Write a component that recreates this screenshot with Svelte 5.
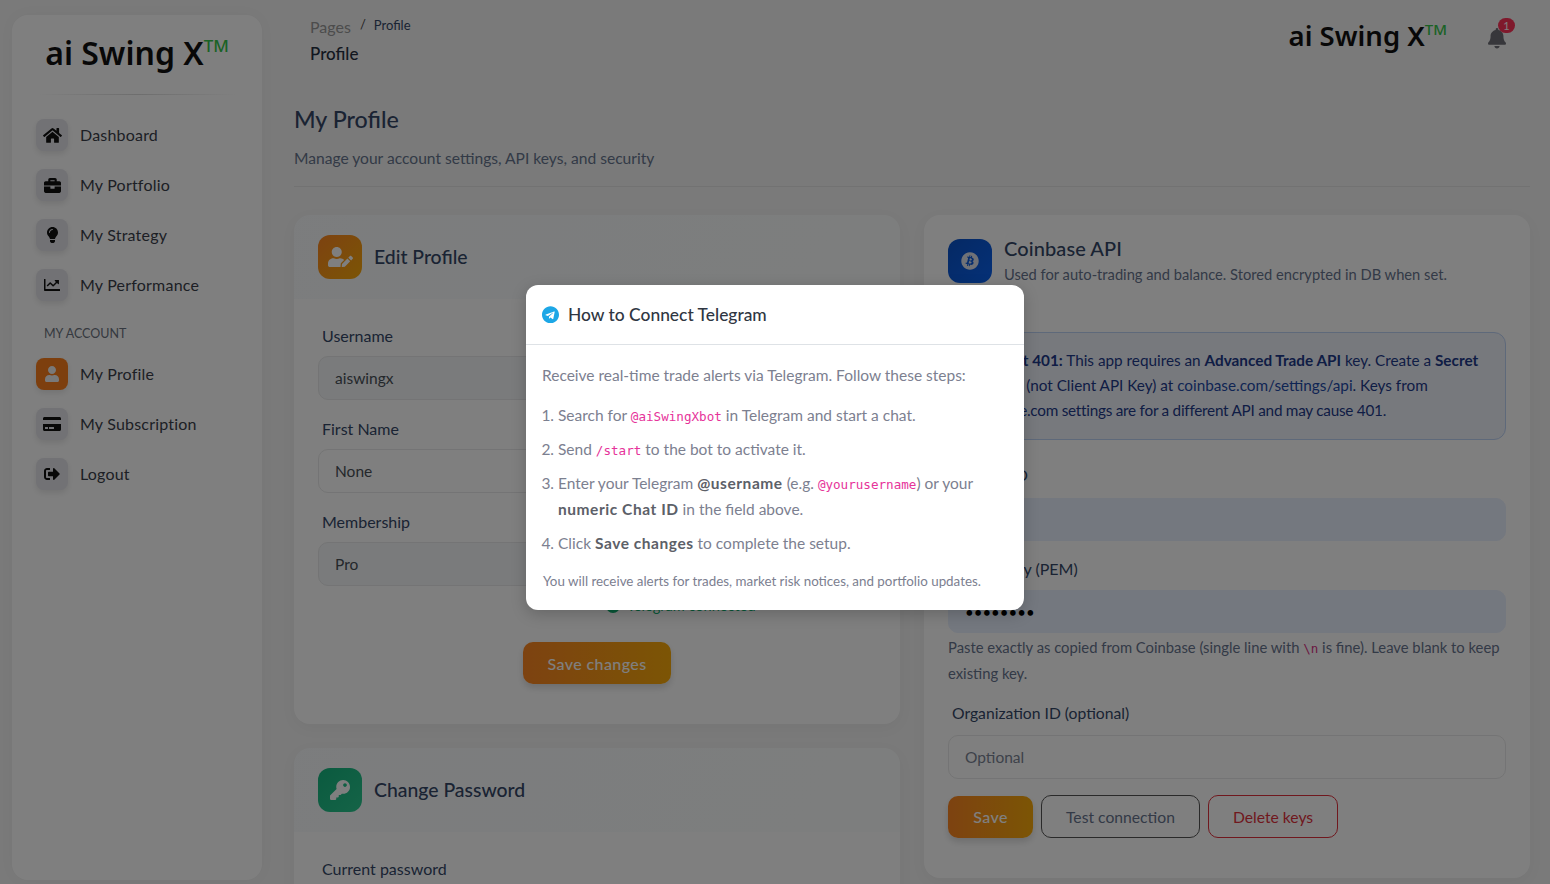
<script>
  const icons = {
    home: ['0 0 576 512','M280.37 148.26L96 300.11V464a16 16 0 0 0 16 16l112.06-.29a16 16 0 0 0 15.92-16V368a16 16 0 0 1 16-16h64a16 16 0 0 1 16 16v95.64a16 16 0 0 0 16 16.05L464 480a16 16 0 0 0 16-16V300L295.67 148.26a12.19 12.19 0 0 0-15.3 0zM571.6 251.47L488 182.56V44.05a12 12 0 0 0-12-12h-56a12 12 0 0 0-12 12v72.61L318.47 43a48 48 0 0 0-61 0L4.34 251.47a12 12 0 0 0-1.6 16.9l25.5 31A12 12 0 0 0 45.15 301l235.22-193.74a12.19 12.19 0 0 1 15.3 0L530.9 301a12 12 0 0 0 16.9-1.6l25.5-31a12 12 0 0 0-1.7-16.93z'],
    briefcase: ['0 0 512 512','M320 336c0 8.84-7.16 16-16 16h-96c-8.84 0-16-7.16-16-16v-48H0v144c0 25.6 22.4 48 48 48h416c25.6 0 48-22.4 48-48V288H320v48zm144-208h-80V80c0-25.6-22.4-48-48-48H176c-25.6 0-48 22.4-48 48v48H48c-25.6 0-48 22.4-48 48v80h512v-80c0-25.6-22.4-48-48-48zm-144 0H192V96h128v32z'],
    bulb: ['0 0 352 512','M96.06 454.35c.01 6.29 1.87 12.45 5.36 17.69l17.09 25.69a31.99 31.99 0 0 0 26.64 14.28h61.71a31.99 31.99 0 0 0 26.64-14.28l17.09-25.69a31.989 31.989 0 0 0 5.36-17.69l.04-38.35H96.01l.05 38.35zM0 176c0 44.37 16.45 84.85 43.56 115.78 16.52 18.85 42.36 58.23 52.21 91.45.04.26.07.52.11.78h160.24c.04-.26.07-.51.11-.78 9.85-33.22 35.69-72.6 52.21-91.45C335.55 260.85 352 220.37 352 176 352 78.61 272.91-.3 175.45 0 73.44.31 0 82.97 0 176zm176-80c-44.11 0-80 35.89-80 80 0 8.84-7.16 16-16 16s-16-7.16-16-16c0-61.76 50.24-112 112-112 8.84 0 16 7.16 16 16s-7.16 16-16 16z'],
    chart: ['0 0 512 512','M500 384H48V76c0-6.6-5.4-12-12-12H12C5.4 64 0 69.4 0 76v340c0 17.7 14.3 32 32 32h468c6.6 0 12-5.4 12-12v-40c0-6.6-5.4-12-12-12zM472 96H360c-15 0-22 18-12 28l34 34-90 90-76-76c-10-10-25-10-34 0l-90 92c-5 5-5 12 0 17l16 16c5 5 12 5 17 0l74-74 76 76c10 10 25 10 34 0l107-107 34 34c10 10 28 3 28-12V102c0-3-3-6-6-6z'],
    user: ['0 0 448 512','M224 256c70.7 0 128-57.3 128-128S294.7 0 224 0 96 57.3 96 128s57.3 128 128 128zm89.6 32h-16.7c-22.2 10.2-46.9 16-72.9 16s-50.6-5.8-72.9-16h-16.7C60.2 288 0 348.2 0 422.4V464c0 26.5 21.5 48 48 48h352c26.5 0 48-21.5 48-48v-41.6c0-74.2-60.2-134.4-134.4-134.4z'],
    card: ['0 0 576 512','M0 432c0 26.5 21.5 48 48 48h480c26.5 0 48-21.5 48-48V256H0v176zm192-68c0-6.6 5.4-12 12-12h136c6.6 0 12 5.4 12 12v40c0 6.6-5.4 12-12 12H204c-6.6 0-12-5.4-12-12v-40zm-128 0c0-6.6 5.4-12 12-12h72c6.6 0 12 5.4 12 12v40c0 6.6-5.4 12-12 12H76c-6.6 0-12-5.4-12-12v-40zM576 80v48H0V80c0-26.5 21.5-48 48-48h480c26.5 0 48 21.5 48 48z'],
    signout: ['0 0 512 512','M497 273L329 441c-15 15-41 4.5-41-17v-96H152c-13.3 0-24-10.7-24-24v-96c0-13.3 10.7-24 24-24h136V88c0-21.4 25.9-32 41-17l168 168c9.3 9.4 9.3 24.6 0 34zM192 436v-40c0-6.6-5.4-12-12-12H96c-17.7 0-32-14.3-32-32V160c0-17.7 14.3-32 32-32h84c6.6 0 12-5.4 12-12V76c0-6.6-5.4-12-12-12H96c-53 0-96 43-96 96v192c0 53 43 96 96 96h84c6.6 0 12-5.4 12-12z'],
    key: ['0 0 512 512','M512 176.001C512 273.203 433.202 352 336 352c-11.22 0-22.19-1.062-32.827-3.069l-24.012 27.014A23.999 23.999 0 0 1 261.223 384H224v40c0 13.255-10.745 24-24 24h-40v40c0 13.255-10.745 24-24 24H24c-13.255 0-24-10.745-24-24v-78.059c0-6.365 2.529-12.47 7.029-16.971l161.802-161.802C163.108 213.814 160 195.271 160 176 160 78.798 238.797.001 335.999 0 433.488-.001 512 78.511 512 176.001zM336 128c0 26.51 21.49 48 48 48s48-21.49 48-48-21.49-48-48-48-48 21.49-48 48z'],
    bell: ['0 0 448 512','M224 512c35.32 0 63.97-28.65 63.97-64H160.03c0 35.35 28.65 64 63.97 64zm215.39-149.71c-19.32-20.76-55.47-51.99-55.47-154.29 0-77.7-54.48-139.9-127.94-155.16V32c0-17.67-14.32-32-31.98-32s-31.98 14.33-31.98 32v20.84C118.56 68.1 64.08 130.3 64.08 208c0 102.3-36.15 133.53-55.47 154.29-6 6.45-8.66 14.16-8.61 21.71.11 16.4 12.98 32 32.1 32h383.8c19.12 0 32-15.6 32.1-32 .05-7.55-2.61-15.27-8.61-21.71z'],
    telegram: ['0 0 496 512','M248 8C111 8 0 119 0 256s111 248 248 248 248-111 248-248S385 8 248 8zm121.8 169.9l-40.7 191.8c-3 13.6-11.1 16.9-22.4 10.5l-62-45.7-29.9 28.8c-3.3 3.3-6.1 6.1-12.5 6.1l4.4-63.1 114.9-103.8c5-4.4-1.1-6.9-7.7-2.5l-142 89.4-61.2-19.1c-13.3-4.2-13.6-13.3 2.8-19.7l239.1-92.2c11.1-4 20.8 2.7 17.2 19.5z'],
    useredit: ['0 0 640 512','M224 256c70.7 0 128-57.3 128-128S294.7 0 224 0 96 57.3 96 128s57.3 128 128 128zm89.6 32h-16.7c-22.2 10.2-46.9 16-72.9 16s-50.6-5.8-72.9-16h-16.7C60.2 288 0 348.2 0 422.4V464c0 26.5 21.5 48 48 48h274.9c-2.4-6.8-3.4-14-2.6-21.3l6.8-60.9 1.2-11.1 7.9-7.9 77.3-77.3c-24.5-27.7-60-45.5-99.9-45.5zm45.3 145.3l-6.8 61c-1.1 10.2 7.5 18.8 17.6 17.6l60.9-6.8 137.9-137.9-71.7-71.7-137.9 137.8zM633 268.9L595.1 231c-9.3-9.3-24.5-9.3-33.8 0l-37.8 37.8-4.1 4.1 71.8 71.7 41.8-41.8c9.3-9.4 9.3-24.5 0-33.9z'],
    bitcoin: ['0 0 512 512','M504 256c0 136.967-111.033 248-248 248S8 392.967 8 256 119.033 8 256 8s248 111.033 248 248zm-141.651-35.33c4.937-32.999-20.191-50.739-54.55-62.573l11.146-44.702-27.213-6.781-10.851 43.524c-7.154-1.783-14.502-3.464-21.803-5.13l10.929-43.81-27.198-6.781-11.153 44.686c-5.922-1.349-11.735-2.682-17.377-4.084l.031-.14-37.53-9.37-7.239 29.062s20.191 4.627 19.765 4.913c11.022 2.751 13.014 10.044 12.68 15.825l-12.696 50.925c.76.194 1.744.473 2.829.907-.907-.225-1.876-.473-2.876-.713l-17.796 71.338c-1.349 3.348-4.767 8.37-12.471 6.464.271.395-19.78-4.937-19.78-4.937l-13.51 31.147 35.414 8.827c6.588 1.651 13.045 3.379 19.4 5.006l-11.262 45.213 27.182 6.781 11.153-44.733a1038.209 1038.209 0 0 0 21.687 5.627l-11.115 44.523 27.213 6.781 11.262-45.128c46.404 8.781 81.299 5.239 95.986-36.727 11.836-33.79-.589-53.281-25.004-65.991 17.78-4.098 31.174-15.792 34.747-39.949zm-62.177 87.179c-8.41 33.79-65.308 15.523-83.755 10.943l14.944-59.899c18.446 4.603 77.6 13.717 68.811 48.956zm8.417-87.667c-7.673 30.736-55.031 15.12-70.393 11.292l13.548-54.327c15.363 3.828 64.836 10.973 56.845 43.035z']
  };
  const mainNav = [
    { label: 'Dashboard', icon: 'home', w: 19 },
    { label: 'My Portfolio', icon: 'briefcase', w: 17 },
    { label: 'My Strategy', icon: 'bulb', w: 11 },
    { label: 'My Performance', icon: 'chart', w: 16 }
  ];
  const accountNav = [
    { label: 'My Profile', icon: 'user', w: 14, active: true },
    { label: 'My Subscription', icon: 'card', w: 18 },
    { label: 'Logout', icon: 'signout', w: 16 }
  ];
</script>

{#snippet icon(name, w)}
  <svg viewBox={icons[name][0]} style:width="{w}px" fill="currentColor" aria-hidden="true"><path d={icons[name][1]} /></svg>
{/snippet}

{#snippet navItem(item)}
  <a class="nav-item" class:active={item.active} href="#top">
    <span class="nav-icon">{@render icon(item.icon, item.w)}</span>
    <span>{item.label}</span>
  </a>
{/snippet}

<div class="app">
  <aside class="sidebar">
    <div class="brand">ai Swing X<sup>TM</sup></div>
    <hr class="brand-rule" />
    <nav class="nav">
      {#each mainNav as item}{@render navItem(item)}{/each}
      <div class="nav-heading">MY ACCOUNT</div>
      {#each accountNav as item}{@render navItem(item)}{/each}
    </nav>
  </aside>

  <main class="main">
    <header class="topbar">
      <div class="crumbs">
        <div class="crumb-row"><span class="crumb-muted">Pages</span><span class="crumb-sep">/</span><span class="crumb-now">Profile</span></div>
        <div class="crumb-title">Profile</div>
      </div>
      <div class="top-right">
        <div class="brand small">ai Swing X<sup>TM</sup></div>
        <div class="bell">
          {@render icon('bell', 18)}
          <span class="badge">1</span>
        </div>
      </div>
    </header>

    <h1 class="page-title">My Profile</h1>
    <p class="page-sub">Manage your account settings, API keys, and security</p>
    <hr class="page-rule" />

    <div class="columns">
      <div class="column">
        <section class="card card-edit">
          <div class="card-head">
            <span class="head-icon orange">{@render icon('useredit', 25)}</span>
            <h2>Edit Profile</h2>
          </div>
          <div class="form-grid">
            <div class="field"><label for="u">Username</label><input id="u" class="input tinted" value="aiswingx" readonly /></div>
            <div class="field"><label for="e">Email</label><input id="e" class="input tinted" value="user@aiswingx.com" readonly /></div>
            <div class="field"><label for="f">First Name</label><input id="f" class="input" value="None" /></div>
            <div class="field"><label for="l">Last Name</label><input id="l" class="input" value="None" /></div>
            <div class="field"><label for="m">Membership</label><input id="m" class="input tinted" value="Pro" readonly /></div>
            <div class="field">
              <label for="t">Telegram</label><input id="t" class="input" value="@aiswingx" />
              <div class="tg-status"><span class="tg-dot"></span>Telegram connected</div>
            </div>
          </div>
          <div class="save-row"><button class="btn-primary wide">Save changes</button></div>
        </section>

        <section class="card">
          <div class="card-head">
            <span class="head-icon green">{@render icon('key', 20)}</span>
            <h2>Change Password</h2>
          </div>
          <div class="form-grid">
            <div class="field"><label for="c">Current password</label><input id="c" class="input" type="password" /></div>
          </div>
        </section>
      </div>

      <section class="card card-api">
        <div class="card-head api-head">
          <span class="head-icon blue">{@render icon('bitcoin', 18)}</span>
          <div>
            <h2>Coinbase API</h2>
            <p class="api-sub">Used for auto-trading and balance. Stored encrypted in DB when set.</p>
          </div>
        </div>
        <div class="alert">
          <strong>If you get 401:</strong> This app requires an <strong>Advanced Trade API</strong> key. Create a <strong>Secret</strong><br />
          <strong class="api-key">API Key</strong> (not Client API Key) at <span class="alert-link">coinbase.com/settings/api</span>. Keys from<br />
          <span class="alert-last">Exchange.com settings are for a different API and may cause 401.</span>
        </div>
        <div class="field api-field"><label for="k">API Key ID</label><input id="k" class="input auto" /></div>
        <div class="field api-field second"><label for="p">Private Key (PEM)</label><input id="p" class="input auto dots" type="password" value="••••••••" /></div>
        <p class="hint">Paste exactly as copied from Coinbase (single line with <code>\n</code> is fine). Leave blank to keep existing key.</p>
        <div class="field org"><label for="o">Organization ID (optional)</label><input id="o" class="input" placeholder="Optional" /></div>
        <div class="actions">
          <button class="btn-primary">Save</button>
          <button class="btn-outline">Test connection</button>
          <button class="btn-outline danger">Delete keys</button>
        </div>
      </section>
    </div>
  </main>

  <div class="backdrop"></div>
  <div class="modal" role="dialog" aria-labelledby="modal-title">
    <div class="modal-head">
      <span class="tg-icon">{@render icon('telegram', 17)}</span>
      <h3 id="modal-title">How to Connect Telegram</h3>
    </div>
    <div class="modal-body">
      <p class="intro">Receive real-time trade alerts via Telegram. Follow these steps:</p>
      <ol>
        <li>Search for <code>@aiSwingXbot</code> in Telegram and start a chat.</li>
        <li>Send <code>/start</code> to the bot to activate it.</li>
        <li>Enter your Telegram <b>@username</b> (e.g. <code>@yourusername</code>) or your <b>numeric Chat ID</b> in the field above.</li>
        <li>Click <b>Save changes</b> to complete the setup.</li>
      </ol>
      <p class="fine">You will receive alerts for trades, market risk notices, and portfolio updates.</p>
    </div>
  </div>
</div>

<style>
  :global(body) { margin: 0; background: #f4f4f4; }
  * { box-sizing: border-box; }
  .app {
    display: flex;
    height: 884px;
    overflow: hidden;
    position: relative;
    font-family: Lato, "Noto Sans", sans-serif;
    font-size: 16px;
    color: #344767;
    background: #f4f4f4;
  }
  svg { display: block; }

  .sidebar {
    flex: 0 0 250px;
    margin: 15px 0 4px 12px;
    background: #ffffff;
    border-radius: 16px;
    padding-top: 16px;
    box-shadow: 0 0 16px rgba(0, 0, 0, 0.03);
  }
  .brand {
    font-family: "Noto Sans", sans-serif;
    font-weight: 650;
    font-size: 32px;
    line-height: 44px;
    color: #111;
    text-align: center;
    white-space: nowrap;
  }
  .brand sup {
    font-size: 17px;
    font-weight: 500;
    color: #34c44a;
    vertical-align: baseline;
    position: relative;
    top: -13px;
  }
  .brand.small { font-size: 27.5px; line-height: 38px; }
  .brand.small sup { font-size: 15px; top: -11px; }
  .brand-rule {
    border: 0;
    height: 1px;
    margin: 13px 24px 0;
    background: linear-gradient(90deg, transparent, #dcdcdc, transparent);
  }
  .nav { padding: 0 24px; margin-top: 14px; }
  .nav-item {
    display: flex;
    align-items: center;
    gap: 12px;
    height: 50px;
    text-decoration: none;
    color: #3b3f4a;
    font-size: 16px;
    font-weight: 400;
    letter-spacing: 0.2px;
    white-space: nowrap;
  }
  .nav-icon {
    width: 32px;
    height: 32px;
    margin-top: 2px;
    border-radius: 8px;
    background: #e4e4ea;
    box-shadow: 0 3px 6px rgba(0, 0, 0, 0.1);
    color: #111;
    display: flex;
    align-items: center;
    justify-content: center;
  }
  .nav-item.active .nav-icon { background: #fb7f1c; color: #f2f2f2; }
  .nav-heading {
    font-size: 12.5px;
    color: #6b7280;
    padding: 15px 0 0 8px;
    height: 48px;
    margin-bottom: -9px;
    line-height: 20px;
  }

  .main { flex: 1; min-width: 0; padding: 0 20px 0 32px; }
  .topbar {
    display: flex;
    justify-content: space-between;
    height: 96px;
    padding: 13px 0 0 16px;
  }
  .crumb-row { display: flex; align-items: flex-start; height: 24px; }
  .crumb-muted { color: #999; font-size: 16px; line-height: 28px; }
  .crumb-sep { margin: 0 8px 0 9px; font-size: 13px; line-height: 22px; color: #444; }
  .crumb-now { font-size: 13px; line-height: 24px; color: #344767; }
  .crumb-title { font-weight: 500; font-size: 17px; line-height: 34px; color: #252f40; }
  .top-right { display: flex; align-items: flex-start; padding-top: 4px; }
  .bell { position: relative; margin: 11px 24px 0 41px; color: #6e6e76; }
  .badge {
    position: absolute;
    left: 10px;
    top: -10px;
    width: 17px;
    height: 15px;
    border-radius: 8px;
    background: #ff3258;
    color: #fff;
    font-size: 11px;
    text-align: center;
    line-height: 15px;
  }

  .page-title { margin: 0; font-weight: 500; font-size: 23.2px; line-height: 47px; color: #344767; }
  .page-sub { margin: 0; font-size: 15.6px; line-height: 28px; color: #67748e; padding-top: 1px; }
  .page-rule { border: 0; height: 1px; background: #e4e4e4; margin: 14px 0 28px; }

  .columns { display: grid; grid-template-columns: 1fr 1fr; gap: 24px; align-items: start; }
  .column { display: flex; flex-direction: column; gap: 24px; }
  .card {
    background: #fff;
    border-radius: 16px;
    box-shadow: 0 4px 16px rgba(0, 0, 0, 0.04);
    padding: 20px 24px 40px;
  }
  .card-api { padding-top: 24px; height: 663px; }
  .card-head {
    display: flex;
    align-items: center;
    gap: 12px;
    margin: -20px -24px 0;
    padding: 20px 24px;
    border-radius: 16px 16px 0 0;
    background: linear-gradient(120deg, rgba(110, 150, 190, 0.05), rgba(110, 190, 160, 0.03));
  }
  .card-head h2 { margin: 0; font-size: 19.4px; font-weight: 500; color: #344767; line-height: 26px; }
  .api-head { margin: -24px -24px 22px; padding: 24px 24px 24px; align-items: flex-start; background: none; }
  .api-head h2 { line-height: 18px; font-size: 20px; letter-spacing: 0.1px; }
  .api-sub { margin: 5px 0 0; font-size: 14.7px; line-height: 24px; color: #67748e; white-space: nowrap; }
  .head-icon {
    width: 44px;
    height: 44px;
    flex: none;
    border-radius: 12px;
    color: #fff;
    display: flex;
    align-items: center;
    justify-content: center;
  }
  .orange { background: linear-gradient(135deg, #fb8522, #f8aa0a); }
  .green { background: linear-gradient(135deg, #15b57f, #2ac88f); }
  .blue { background: linear-gradient(135deg, #0a52c8, #0b62f0); }
  .blue svg { color: #e0e4ee; }

  .form-grid { display: grid; grid-template-columns: 1fr 1fr; column-gap: 24px; margin-top: 25px; }
  .field { min-width: 0; margin-bottom: 17px; }
  .field label { display: block; margin: 0 0 8px 4px; font-size: 16px; line-height: 24px; color: #344767; white-space: nowrap; }
  .input {
    display: block;
    width: 100%;
    height: 44px;
    padding: 0 16px;
    border: 1px solid #e8e9ea;
    border-radius: 10px;
    background: #fff;
    font: inherit;
    font-size: 15.5px;
    color: #495057;
    outline: none;
  }
  .input::placeholder { color: #7b8494; opacity: 1; }
  .tinted { background: #f4f6f9; }
  .auto { background: #e8f0fe; border-color: #e8f0fe; height: 43px; }
  .dots { font-size: 15px; color: #000; }
  .tg-status { display: flex; align-items: center; gap: 7px; margin: 8px 0 0 -3px; color: #10b070; font-size: 14.6px; line-height: 24px; }
  .tg-dot { width: 14px; height: 14px; border-radius: 50%; background: #10b070; }
  .save-row { display: flex; justify-content: center; }
  .card-edit .field:nth-child(n + 5) { margin-bottom: 0; }
  .card-edit .save-row { margin-top: 24px; }
  .btn-primary {
    height: 42px;
    padding: 0 24px;
    border: 0;
    border-radius: 10px;
    background: linear-gradient(90deg, #fb8522, #f8aa0a);
    color: #fff;
    font: inherit;
    font-weight: 500;
    letter-spacing: 0.4px;
    box-shadow: 0 4px 7px rgba(0, 0, 0, 0.14);
  }
  .wide { width: 148px; }
  .btn-outline {
    height: 43px;
    padding: 0 24px;
    border: 1px solid #555;
    border-radius: 10px;
    background: transparent;
    color: #67748e;
    font: inherit;
    font-size: 15.7px;
    font-weight: 400;
  }
  .danger { border-color: #e0303c; color: #e0303c; }

  .alert {
    height: 108px;
    padding: 15px 16px 0;
    margin-bottom: 23px;
    border: 1px solid #bdd2f5;
    border-radius: 12px;
    background: #eef3fb;
    color: #1e3a8a;
    font-size: 15.3px;
    line-height: 25px;
    white-space: nowrap;
  }
  .alert strong { font-weight: 700; }
  .alert .api-key { margin-right: 3px; }
  .alert-link { color: #1e4aa8; }
  .alert-last { letter-spacing: -0.25px; }
  .api-field { margin-bottom: 16px; }
  .api-field label { margin-bottom: 11px; }
  .api-field.second label { margin-bottom: 9px; }
  .hint { margin: -15px 0 0; font-size: 14.8px; line-height: 26px; color: #67748e; }
  .hint code { font-size: 12.5px; color: #d63384; }
  .org { margin-top: 15px; margin-bottom: 16px; }
  .org label { margin-bottom: 10px; font-size: 15.7px; }
  .actions { display: flex; gap: 8px; align-items: center; }
  .actions .btn-primary { width: 85px; padding: 0; }

  .backdrop { position: absolute; inset: 0; background: rgba(0, 0, 0, 0.5); }
  .modal {
    position: absolute;
    top: 285px;
    left: 526px;
    width: 498px;
    height: 325px;
    background: #fff;
    border-radius: 12px;
    box-shadow: 0 4px 16px rgba(0, 0, 0, 0.2);
  }
  .modal-head {
    display: flex;
    align-items: center;
    gap: 9px;
    height: 60px;
    padding-left: 16px;
    border-bottom: 1px solid #dee2e6;
  }
  .tg-icon { color: #1da7e6; }
  .modal-head h3 { margin: 0; font-size: 17.4px; font-weight: 500; color: #2f3642; }
  .modal-body { padding: 16px; color: #7c8090; font-size: 15.5px; }
  .intro { margin: 0 0 13px; line-height: 28px; }
  ol { margin: 0; padding: 0 0 0 16px; }
  li { line-height: 26px; margin-bottom: 8px; }
  li b { font-weight: 700; color: #5c6068; letter-spacing: 0.55px; }
  code { font-family: "DejaVu Sans Mono", monospace; font-size: 12.6px; line-height: 1; color: #e6339a; }
  .fine { margin: 15px 0 0 1px; font-size: 13.37px; line-height: 20px; color: #7c8090; }
</style>
